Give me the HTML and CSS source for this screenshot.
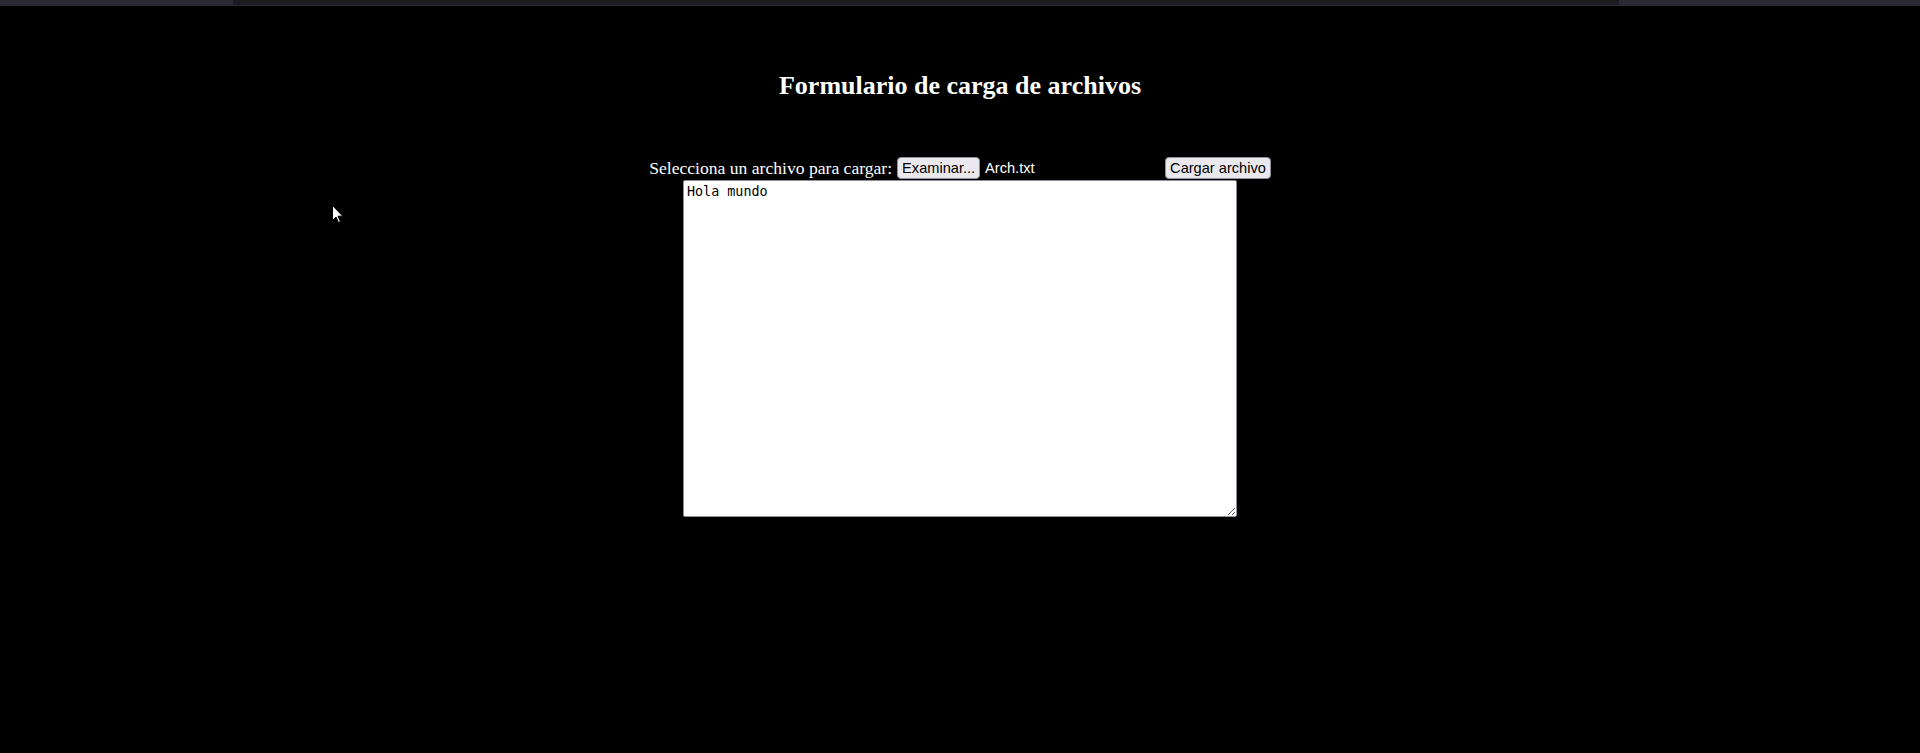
FILE: index.html
```html
<!DOCTYPE html>
<html lang="es">
<head>
<meta charset="utf-8">
<title>Formulario de carga de archivos</title>
<link rel="stylesheet" href="styles.css">
</head>
<body>
<div class="topbar"><div class="topbar-inner"></div></div>
<main class="page">
  <h2 class="title">Formulario de carga de archivos</h2>
  <form class="upload">
    <div class="row">
      <label class="label">Selecciona un archivo para cargar:</label>
      <span class="file">
        <button type="button" class="btn">Examinar...</button>
        <span class="file-name">Arch.txt</span>
      </span>
      <button type="button" class="btn">Cargar archivo</button>
    </div>
    <textarea class="content">Hola mundo</textarea>
  </form>
</main>
<svg class="cursor" width="12" height="19" viewBox="0 0 12 19"><path d="M0.5 0.5 L0.5 15.5 L4 12 L6.5 17.5 L8.5 16.5 L6 11.2 L10.8 11.2 Z" fill="#fff" stroke="#000" stroke-width="1"/></svg>
</body>
</html>
```

FILE: styles.css
```css
html, body {
  margin: 0;
  padding: 0;
  background: #000;
}
body {
  font-family: "Liberation Serif", "Times New Roman", serif;
  color: #fff;
  height: 753px;
  overflow: hidden;
  position: relative;
}
.topbar {
  height: 6px;
  background: #2b2a33;
  display: flex;
}
.topbar-inner {
  margin-left: 233px;
  width: 1386px;
  height: 5px;
  background: #1c1b22;
}
.page {
  text-align: center;
}
.title {
  font-size: 26px;
  font-weight: bold;
  margin: 65px 0 0;
  line-height: 30px;
}
.upload {
  margin-top: 56px;
}
.row {
  display: flex;
  justify-content: center;
  align-items: center;
  height: 22px;
}
.label {
  font-size: 17.6px;
  margin-right: 5px;
}
.file {
  display: inline-flex;
  align-items: center;
  width: 264px;
  margin-right: 4px;
  text-align: left;
}
.btn {
  font-family: "Liberation Sans", Arial, sans-serif;
  font-size: 14.6px;
  color: #000;
  background: #e9e9ed;
  border: 1px solid #8f8f9d;
  border-radius: 4px;
  height: 22px;
  padding: 0 4px;
  margin: 0;
}
.file-name {
  font-family: "Liberation Sans", Arial, sans-serif;
  font-size: 14.6px;
  margin-left: 5px;
}
.content {
  display: block;
  margin: 1px auto 0;
  width: 554px;
  height: 337px;
  box-sizing: border-box;
  border: 1px solid #8f8f9d;
  border-radius: 2px;
  padding: 3px;
  font-family: "DejaVu Sans Mono", monospace;
  font-size: 13.4px;
  color: #000;
  background: #fff;
  resize: both;
}
.cursor {
  position: absolute;
  left: 332px;
  top: 205px;
}
```
